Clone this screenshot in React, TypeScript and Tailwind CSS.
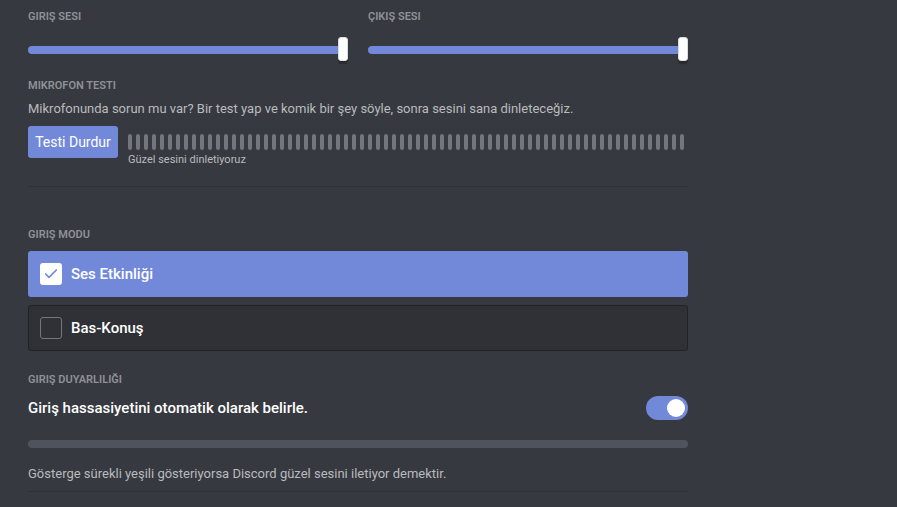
import { Check } from 'lucide-react';

const font = { fontFamily: 'Roboto, "Noto Sans", sans-serif' };

function SectionLabel({ children, className = '' }: { children: string; className?: string }) {
  return (
    <div className={`text-[11px] leading-[16px] font-semibold uppercase text-[#8e9297] ${className}`}>
      {children}
    </div>
  );
}

function Slider({ label }: { label: string }) {
  return (
    <div className="w-[320px]">
      <SectionLabel>{label}</SectionLabel>
      <div className="relative mt-[12px] h-[24px]">
        <div className="absolute left-0 right-[5px] top-[9px] h-[8px] rounded-full bg-[#7289da]" />
        <div className="absolute right-0 top-0 h-[24px] w-[10px] rounded-[3px] border border-[#dcddde] bg-white shadow-[0_3px_1px_rgba(0,0,0,0.25)]" />
      </div>
    </div>
  );
}

function ModeOption({ label, checked }: { label: string; checked: boolean }) {
  return (
    <div
      className={
        checked
          ? 'flex h-[46px] items-center gap-[9px] rounded-[3px] bg-[#7289da] px-[12px]'
          : 'flex h-[46px] items-center gap-[9px] rounded-[3px] border border-[#202225] bg-[#2f3136] px-[11px]'
      }
    >
      {checked ? (
        <div className="flex h-[22px] w-[22px] items-center justify-center rounded-[3px] bg-white">
          <Check size={16} strokeWidth={2.5} className="text-[#7289da]" />
        </div>
      ) : (
        <div className="h-[22px] w-[22px] rounded-[3px] border border-[#72767d]" />
      )}
      <span className="text-[15px] font-medium text-white">{label}</span>
    </div>
  );
}

export default function App() {
  const ticks = Array.from({ length: 70 }, (_, i) => i);

  return (
    <div className="h-[507px] w-full overflow-hidden bg-[#36393f] pl-[28px] pt-[9px]" style={font}>
      <div className="w-[660px]">
        <div className="flex gap-[20px]">
          <Slider label="Giriş Sesi" />
          <Slider label="Çıkış Sesi" />
        </div>

        <SectionLabel className="mt-[17px]">Mikrofon Testi</SectionLabel>
        <p className="mt-[5px] text-[13px] leading-[20px] text-[#b9bbbe]">
          Mikrofonunda sorun mu var? Bir test yap ve komik bir şey söyle, sonra sesini sana dinleteceğiz.
        </p>
        <div className="mt-[7px] flex gap-[10px]">
          <button className="h-[32px] w-[90px] rounded-[3px] bg-[#7289da] text-[14px] font-normal text-white">
            Testi Durdur
          </button>
          <div className="flex-1">
            <div className="mt-[8px] flex gap-[4px]">
              {ticks.map((i) => (
                <div key={i} className="h-[16px] w-[4px] rounded-full bg-[#72767d]" />
              ))}
            </div>
            <div className="mt-[3px] text-[11px] leading-[14px] text-[#b9bbbe]">Güzel sesini dinletiyoruz</div>
          </div>
        </div>

        <div className="mt-[19px] h-px bg-[#2f3136]" />

        <SectionLabel className="mt-[40px]">Giriş Modu</SectionLabel>
        <div className="mt-[8px] flex flex-col gap-[8px]">
          <ModeOption label="Ses Etkinliği" checked />
          <ModeOption label="Bas-Konuş" checked={false} />
        </div>

        <SectionLabel className="mt-[21px]">Giriş Duyarlılığı</SectionLabel>
        <div className="mt-[8px] flex items-center justify-between">
          <span className="text-[15px] font-medium text-white">Giriş hassasiyetini otomatik olarak belirle.</span>
          <div className="relative h-[24px] w-[42px] rounded-full bg-[#7289da]">
            <div className="absolute right-[3px] top-[3px] h-[18px] w-[18px] rounded-full bg-white" />
          </div>
        </div>

        <div className="mt-[20px] h-[8px] rounded-full bg-[#4f545c]" />

        <p className="mt-[16px] text-[13px] leading-[20px] text-[#b9bbbe]">
          Gösterge sürekli yeşili gösteriyorsa Discord güzel sesini iletiyor demektir.
        </p>
        <div className="mt-[7px] h-px bg-[#2f3136]" />
      </div>
    </div>
  );
}
